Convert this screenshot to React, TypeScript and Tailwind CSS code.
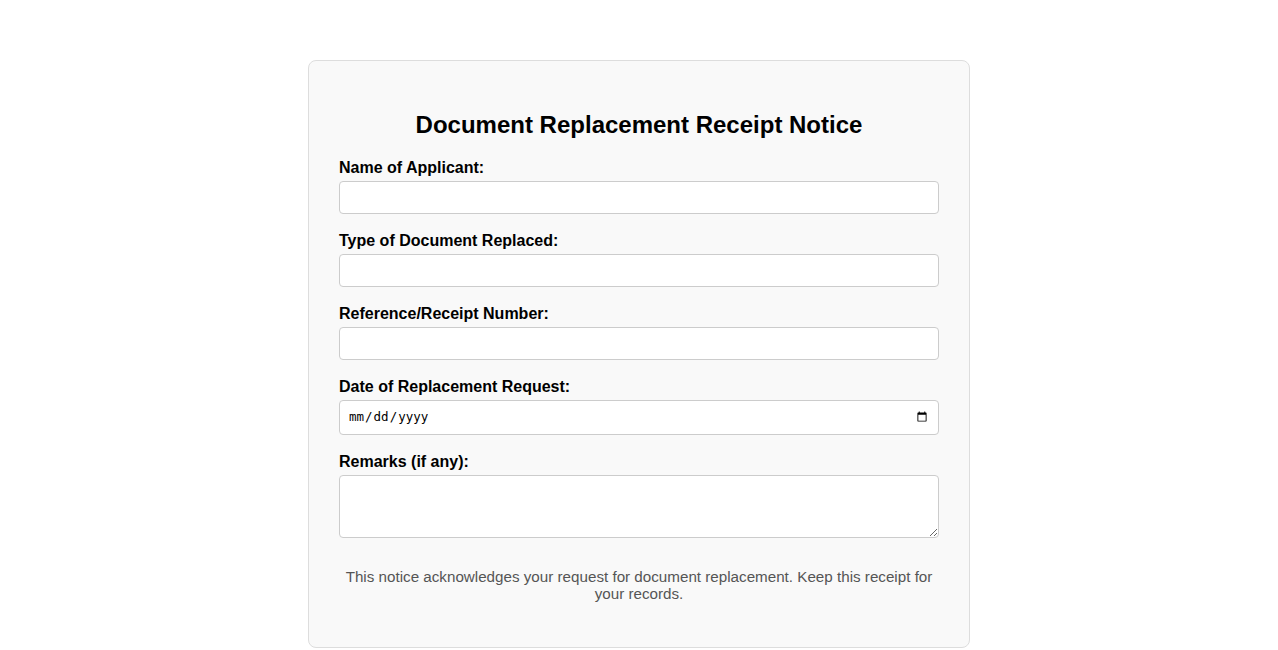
import React from "react";

export default function App() {
  const labelCls = "block text-[16px] font-bold leading-[18px] mb-1 text-black";
  const inputCls =
    "block w-full h-[33px] px-2 border border-[#ccc] rounded-[4px] bg-white text-[13px] outline-none mb-[18px]";
  return (
    <div className="min-h-[650px] bg-white pt-[60px]" style={{ fontFamily: '"Liberation Sans", Arial, sans-serif' }}>
      <div className="mx-auto w-[662px] border border-[#ddd] rounded-[8px] bg-[#f9f9f9] px-[30px] pt-[50px] pb-[45px]">
        <h2 className="text-center text-[24px] font-bold leading-[28px] mb-[20px] text-black">
          Document Replacement Receipt Notice
        </h2>
        <label className={labelCls}>Name of Applicant:</label>
        <input type="text" className={inputCls} />
        <label className={labelCls}>Type of Document Replaced:</label>
        <input type="text" className={inputCls} />
        <label className={labelCls}>Reference/Receipt Number:</label>
        <input type="text" className={inputCls} />
        <label className={labelCls}>Date of Replacement Request:</label>
        <input
          type="date"
          className="block w-full h-[35px] px-2 border border-[#ccc] rounded-[4px] bg-white text-[12.5px] outline-none mb-[18px] text-black"
          style={{ fontFamily: '"DejaVu Sans Mono", monospace' }}
        />
        <label className={labelCls}>Remarks (if any):</label>
        <textarea className="block w-full h-[63px] px-2 py-2 border border-[#ccc] rounded-[4px] bg-white text-[13px] outline-none" />
        <p className="mt-[30px] text-center text-[15.2px] leading-[17px] text-[#555]">
          This notice acknowledges your request for document replacement. Keep this receipt for your records.
        </p>
      </div>
    </div>
  );
}
